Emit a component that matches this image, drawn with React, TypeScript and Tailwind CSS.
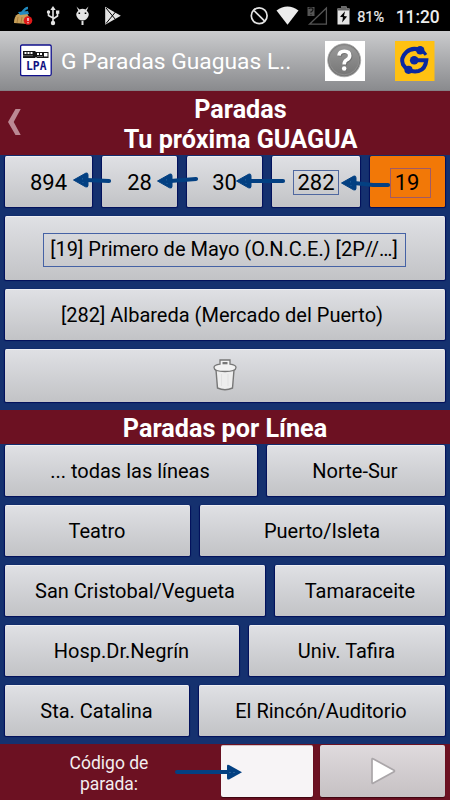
import React from 'react';

const face =
  'flex items-center justify-center rounded-[1.5px] bg-linear-to-b from-[#dfe0e4] to-[#c2c3c6] border-t border-t-[#eeeef2] shadow-[0_0.5px_1px_0.5px_#02105a] text-black whitespace-nowrap';

function Key({ className = '', text = '', children }: { className?: string; text?: string; children: React.ReactNode }) {
  return (
    <button className={`${face} ${className}`}>
      <span className={text}>{children}</span>
    </button>
  );
}

function Arrow({ className, tail }: { className: string; tail: string }) {
  return (
    <svg className={`absolute pointer-events-none overflow-visible ${className}`} width="38" height="16" viewBox="0 0 38 16">
      <path d={tail} stroke="#034082" strokeWidth="4.2" strokeLinecap="round" fill="none" />
      <path d="M1.5 8 14 1Q16 .6 16 2.8V13.4Q16 15.8 13.5 14.8Z" fill="#034082" stroke="#034082" strokeLinejoin="round" />
      <path d="M10.5 6.5v.8M11 10v.6" stroke="#3979b3" strokeWidth=".9" />
    </svg>
  );
}

function StatusBar() {
  return (
    <div className="h-[31px] bg-black flex items-center text-[#e4e4e4]">
      <svg width="450" height="31" viewBox="0 0 450 31">
        <path d="M22 13Q25 8 28 8" stroke="#2189bd" strokeWidth="2.5" fill="none" />
        <path d="M18 14 27 13 29 17 28 24 14 23Q14 16 18 14Z" fill="#c79f58" />
        <path d="M18 12 28 11 29 14 20 15Z" fill="#238ac0" />
        <path d="m18 17-1 6m5-6-1 6" stroke="#93682d" strokeWidth=".6" />
        <circle cx="28" cy="20.5" r="4.3" fill="#df1919" />
        <path d="M28 18v3M28 22.3v1" stroke="white" strokeWidth="1.3" />
        <g stroke="#e4e4e4" strokeWidth="1.6" fill="none">
          <path d="M53 8v15M48.5 12v3.5L53 18M57.5 12v4L53 19" />
        </g>
        <path d="m50.3 10 2.7-4 2.7 4Z" fill="#e4e4e4" />
        <circle cx="53" cy="23" r="2.2" fill="#e4e4e4" />
        <circle cx="48.5" cy="12" r="1.7" fill="#e4e4e4" />
        <path d="M56 10.5h3.3v3.3H56z" fill="#e4e4e4" />
        <path d="m76.5 6.5 3 3Q82.5 8 85.5 9.5l3-3-1.8 4.3Q89.5 13 88.5 16q-2 4.5-6 4.5t-6-4.5q-1-3 1.8-5.2Z" fill="#e4e4e4" />
        <path d="M82.5 21v4" stroke="#e4e4e4" strokeWidth="2" />
        <path d="M79.3 12.5v1.5M85.5 12.5v1.5" stroke="black" strokeWidth="1.6" />
        <path d="M105.2 6.8 120.8 15.7 105.2 24.7Z" fill="#e4e4e4" />
        <path d="m106 8 9.5 11.5M106 23.5l9.5-11.5" stroke="black" strokeWidth="1" />
        <circle cx="259.2" cy="15.7" r="7.9" stroke="#e4e4e4" strokeWidth="1.7" fill="none" />
        <path d="m254 10.5 10.7 10.7" stroke="#e4e4e4" strokeWidth="1.7" />
        <path d="M276.5 10.5Q287.5 2.5 298.5 10.5L287.5 24.7Z" fill="#ececec" />
        <path d="M309.5 24.2 326.4 8V24.2Z" stroke="#555" strokeWidth="1.3" fill="none" />
        <path d="M307.5 7h7v9h-7z" fill="#555" />
        <path d="M309 9q0-1.2 2-1.2t2 1.8-2 2.2v1M311 14.2v1" stroke="#151515" strokeWidth="1.2" fill="none" />
        <path d="M337.5 8.6h12v16h-12zM341 6.5h5.5V9H341z" fill="#e4e4e4" />
        <path d="M337.5 8.6h12v1.8h-12zM341 6.5h5.5v2.1H341z" fill="#666" />
        <path d="m345 11.3-5 5.5 3 .5-.9 5.2 5-6-3.1-.5Z" fill="black" />
        <text x="357.2" y="21.5" fontSize="15" textLength="27" lengthAdjust="spacingAndGlyphs" fill="#ededed" stroke="#ededed" strokeWidth=".2">81%</text>
        <text x="395.7" y="22.5" fontSize="18.5" fontWeight="500" textLength="44" lengthAdjust="spacingAndGlyphs" fill="#ededed">11:20</text>
      </svg>
    </div>
  );
}

function LpaLogo() {
  return (
    <svg className="ml-5 shrink-0" width="32" height="33" viewBox="0 0 32 33">
      <rect x=".6" y="1" width="30.6" height="30.6" rx="1.5" fill="white" stroke="#10108c" strokeWidth="1.3" />
      <path d="M3 7h12l1 1h12.5v6H17l-1-1-1 1H3Z" fill="#161616" />
      <path d="M4.5 8h2v2h-2zM7.5 8h2v2h-2zM10.5 8h2v2h-2zM17 9h2v2h-2zM20 9h2v2h-2zM24 9h3.5v3.5H24z" fill="white" />
      <path d="M3 11.7h10M17 12.5h6" stroke="#999" strokeWidth=".6" />
      <text x="6" y="26.3" fontSize="12.5" fontWeight="700" fontFamily="DejaVu Sans Mono, monospace" textLength="20.5" lengthAdjust="spacingAndGlyphs" fill="#111181">LPA</text>
    </svg>
  );
}

function HelpIcon() {
  return (
    <svg className="shrink-0" width="40" height="40" viewBox="0 0 40 40">
      <defs>
        <linearGradient id="disc" x2="0" y2="1"><stop stopColor="#999" /><stop offset="1" stopColor="#777" /></linearGradient>
      </defs>
      <path d="M0 0h40v40H0z" fill="white" />
      <circle cx="19.2" cy="19.3" r="16.5" fill="#777" stroke="#aaa" strokeWidth=".8" />
      <circle cx="19.2" cy="19" r="14.8" fill="url(#disc)" stroke="#8e8e8e" />
      <path d="M14 14.7Q14.3 10.2 19.3 10.2 24.7 10.2 24.7 14.7 24.7 17.2 21.5 19 19.2 20.2 19.2 23.5M19.2 26v2.4" stroke="#555" strokeWidth="4" fill="none" transform="translate(.7 .8)" opacity=".5" />
      <path d="M14 14.7Q14.3 10.2 19.3 10.2 24.7 10.2 24.7 14.7 24.7 17.2 21.5 19 19.2 20.2 19.2 23.5" stroke="white" strokeWidth="3.6" fill="none" />
      <circle cx="19.2" cy="27.5" r="2.3" fill="white" />
    </svg>
  );
}

function GuaguasLogo() {
  return (
    <svg className="ml-[30px] shrink-0" width="40" height="40" viewBox="0 0 40 40">
      <path d="M0 0h39.5v40H0z" fill="#ffc112" />
      <path d="M25 9Q17 6 11.5 11 5.2 17 8 23.5 10 27 13.3 28.8" stroke="#0a28a0" strokeWidth="4" fill="none" />
      <path d="M19 19.2H31.3Q30.5 28 23.5 30 18 31.3 13 28.5" stroke="#0a28a0" strokeWidth="4" fill="none" />
      <path d="M24 8.5Q28 9.5 31 13.8" stroke="#0a28a0" strokeWidth="3" fill="none" />
      <circle cx="25.2" cy="9.2" r="4.2" fill="#0a28a0" />
      <circle cx="19.2" cy="19.2" r="4.3" fill="#0a28a0" />
      <circle cx="13.5" cy="28.8" r="4.1" fill="#0a28a0" />
    </svg>
  );
}

function TrashIcon() {
  return (
    <svg className="translate-y-[-1px]" width="26" height="34" viewBox="0 0 26 34">
      <path d="M4 12 5.5 30Q13 33.5 20.5 30L22 12" fill="#eee" stroke="#777" strokeWidth="1.4" />
      <path d="M2 9.5Q2 7 8 6.2V2h10v4.2Q24 7 24 9.5 24 13.5 13 13.5T2 9.5Z" fill="#f2f2f2" stroke="#777" strokeWidth="1.3" />
      <path d="M10.5 4h5v2.3h-5z" fill="#777" />
      <path d="M9.5 16v12M16 16v12" stroke="#e2e2e2" />
    </svg>
  );
}

export default function App() {
  return (
    <main className="relative w-[450px] h-[800px] overflow-hidden bg-[#15316f] font-[Roboto,sans-serif] flex flex-col">
      <StatusBar />
      <header className="h-[60px] shrink-0 flex items-center bg-linear-to-b from-[#cbccce] to-[#8a8b8e] border-b border-[#858085] text-white">
        <LpaLogo />
        <h1 className="ml-[9px] w-[264px] pt-[2px] text-[22.8px] leading-[30px] whitespace-nowrap">G Paradas Guaguas L..</h1>
        <HelpIcon />
        <GuaguasLogo />
      </header>

      <section className="relative h-[64px] shrink-0 bg-[#6c1122] pl-[31px] pt-[4px] text-center text-white font-bold text-[25.2px] leading-[30px]">
        <svg className="absolute left-[7px] top-[17px]" width="16" height="28" viewBox="0 0 16 28">
          <path d="M8.5 1h5.2L6.7 14l7 13H8.5L1 14Z" fill="#bb8994" />
        </svg>
        <p>Paradas</p>
        <p>Tu próxima GUAGUA</p>
      </section>

      <section className="h-[255px] shrink-0 px-[5px] pt-[1px] flex flex-col gap-[9px]">
        <div className="h-[51px] flex gap-[10px] text-[22px]">
          <Key className="w-[87px]">894</Key>
          <Key className="w-[75px]">28</Key>
          <Key className="w-[75px]">30</Key>
          <Key className="w-[88px]" text="border border-[#5068a0] h-[25px] w-[46px] leading-[23px]">282</Key>
          <button className="w-[75px] rounded-[1.5px] bg-[#f27807] shadow-[0_0.5px_1px_0.5px_#02105a] flex items-center justify-center">
            <span className="block border border-[#a05a66] h-[30px] w-[41px] pr-[6px] leading-[27px] mt-[3px] mr-[-5px] text-center">19</span>
          </button>
        </div>
        <Key className="h-[64px] text-[20px]" text="border border-[#4562a5] h-[34px] w-[363px] leading-[31px] mt-[3px] ml-[-2px]">[19] Primero de Mayo (O.N.C.E.) [2P//…]</Key>
        <Key className="h-[51px] text-[20px]" text="mr-[6px]">[282] Albareda (Mercado del Puerto)</Key>
        <Key className="h-[53px]"><TrashIcon /></Key>
      </section>

      <h2 className="h-[34px] shrink-0 bg-[#6c1122] text-center text-white font-bold text-[25.2px] leading-[38px]">Paradas por Línea</h2>

      <section className="h-[300px] shrink-0 px-[5px] pt-[1px] flex flex-col gap-[9px] text-[20px]">
        <div className="flex gap-[10px] h-[51px]"><Key className="w-[252px]" text="mr-[2px]">... todas las líneas</Key><Key className="w-[178px]" text="mr-[2px]">Norte-Sur</Key></div>
        <div className="flex gap-[10px] h-[51px]"><Key className="w-[185px]" text="mr-px">Teatro</Key><Key className="w-[245px]" text="mr-px">Puerto/Isleta</Key></div>
        <div className="flex gap-[10px] h-[51px]"><Key className="w-[260px]">San Cristobal/Vegueta</Key><Key className="w-[170px]">Tamaraceite</Key></div>
        <div className="flex gap-[10px] h-[51px]"><Key className="w-[234px]" text="mr-px">Hosp.Dr.Negrín</Key><Key className="w-[196px]" text="mr-px">Univ. Tafira</Key></div>
        <div className="flex gap-[10px] h-[51px]"><Key className="w-[184px]" text="mr-px">Sta. Catalina</Key><Key className="w-[246px]" text="mr-[2px]">El Rincón/Auditorio</Key></div>
      </section>

      <footer className="h-[56px] shrink-0 bg-[#6c1122] flex pt-px">
        <label className="w-[217px] h-[55px] pt-[8px] pl-px text-center text-[#f3edef] text-[17.5px] leading-[21px]"><p>Código de</p><p>parada:</p></label>
        <input aria-label="Código de parada" className="ml-[4px] w-[92px] h-[52px] bg-[#f7f4f6] rounded-[2px] border-t border-[#d3c2c6] shadow-[0_1px_1px_#3c0610]" />
        <button className="ml-[7px] w-[125px] h-[52px] flex items-center justify-center bg-linear-to-b from-[#dfdadd] to-[#c6c1c3] rounded-[2px] shadow-[0_1px_1px_#3c0610]">
          <svg width="26" height="28" viewBox="0 0 26 28"><path d="M2 2.5V25.5Q2 27 3.5 26L24 14.8Q25 14 24 13.2L3.5 2Q2 1 2 2.5Z" fill="white" stroke="#aaa6a9" strokeWidth="1.7" /></svg>
        </button>
      </footer>

      <Arrow className="left-[72px] top-[172px]" tail="M14 8 37 9" />
      <Arrow className="left-[156px] top-[173px]" tail="M14 8 40 6" />
      <Arrow className="left-[235px] top-[173px]" tail="M14 8H48" />
      <Arrow className="left-[340px] top-[175px]" tail="M14 8 33 10 48 10" />
      <svg className="absolute left-[174px] top-[762px] pointer-events-none" width="70" height="20" viewBox="0 0 70 20">
        <path d="M3 10H54" stroke="#034082" strokeWidth="4" strokeLinecap="round" />
        <path d="M53 4Q53 2 55 3L68 10.2 55 17.5Q53 18 53 16Z" fill="#034082" />
        <path d="M56 10v1m4-1v1" stroke="#5c88b3" strokeWidth=".8" />
      </svg>
    </main>
  );
}
